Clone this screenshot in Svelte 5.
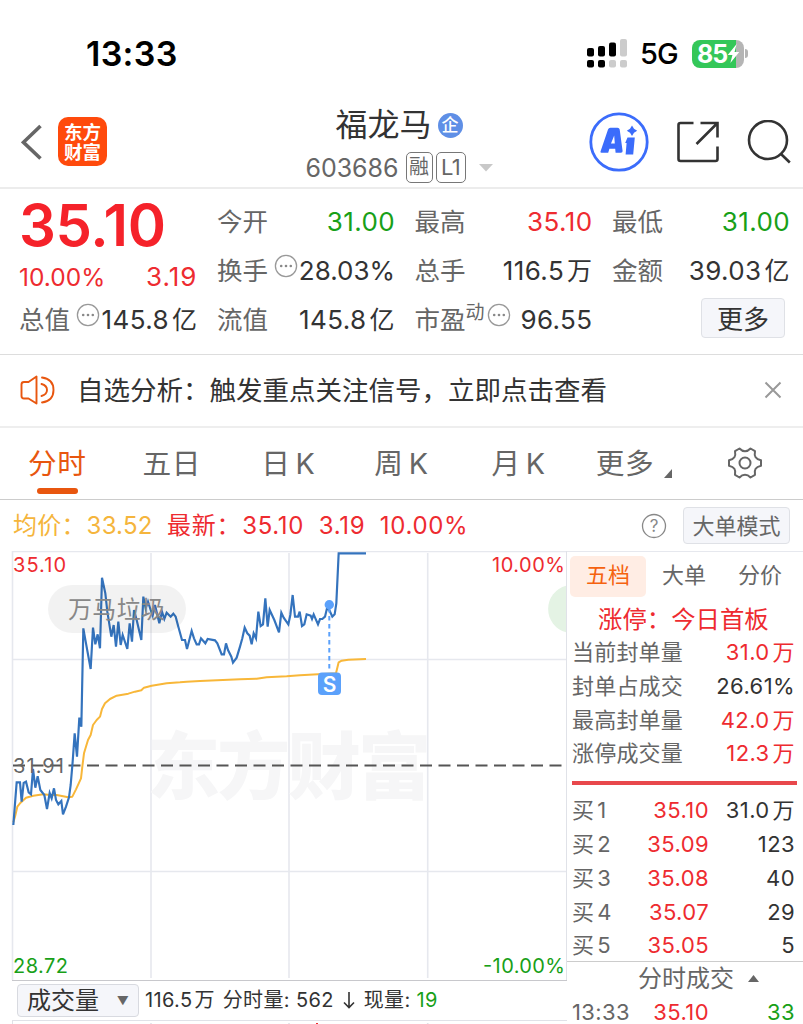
<script lang="ts">
	type Tone = 'up' | 'down' | 'plain';

	interface Quote {
		label: string;
		value: string;
		unit?: string;
		tone: Tone;
		info?: boolean;
		sup?: string;
	}

	const quotes: Quote[] = [
		{ label: '今开', value: '31.00', tone: 'down' },
		{ label: '最高', value: '35.10', tone: 'up' },
		{ label: '最低', value: '31.00', tone: 'down' },
		{ label: '换手', value: '28.03%', tone: 'plain', info: true },
		{ label: '总手', value: '116.5', unit: '万', tone: 'plain' },
		{ label: '金额', value: '39.03', unit: '亿', tone: 'plain' },
		{ label: '流值', value: '145.8', unit: '亿', tone: 'plain' },
		{ label: '市盈', value: '96.55', tone: 'plain', info: true, sup: '动' }
	];

	const periods = ['分时', '五日', '日K', '周K', '月K'];
	let period = $state('分时');

	const sideTabs = ['五档', '大单', '分价'];
	let sideTab = $state('五档');

	const limitRows = [
		{ label: '当前封单量', value: '31.0', unit: '万', tone: 'up' },
		{ label: '封单占成交', value: '26.61%', unit: '', tone: 'plain' },
		{ label: '最高封单量', value: '42.0', unit: '万', tone: 'up' },
		{ label: '涨停成交量', value: '12.3', unit: '万', tone: 'up' }
	];

	const bids = [
		{ level: 1, price: '35.10', volume: '31.0', unit: '万' },
		{ level: 2, price: '35.09', volume: '123', unit: '' },
		{ level: 3, price: '35.08', volume: '40', unit: '' },
		{ level: 4, price: '35.07', volume: '29', unit: '' },
		{ level: 5, price: '35.05', volume: '5', unit: '' }
	];

	// both series are kept at 3 units per px
	const priceLine =
		'40,840 50,712 60,712 65,770 71,714 78,710 86,742 93,748 99,672 106,728 113,694 121,735 133,750 141,792 149,744 155,760 162,730 168,765 175,778 184,768 189,808 198,785 207,757 212,720 218,650 224,565 231,635 238,518 244,545 250,250 258,295 272,372 279,248 286,298 293,268 300,310 306,98 316,145 322,200 334,275 341,240 348,305 355,230 362,300 368,270 382,312 389,235 396,290 402,195 410,225 424,285 430,155 437,190 444,170 452,195 458,212 465,180 478,235 486,200 493,222 500,203 512,215 520,206 527,215 535,245 546,285 555,285 561,312 575,258 582,280 590,298 597,298 603,280 616,295 623,282 645,286 652,295 665,328 672,328 678,295 684,315 694,335 699,353 710,338 720,305 727,280 734,248 742,265 749,272 755,298 761,265 768,280 775,200 782,243 789,238 796,160 803,245 809,195 823,225 837,262 844,203 851,218 865,238 871,210 878,150 885,215 894,215 899,200 906,243 913,238 920,208 932,212 936,222 941,208 954,238 960,222 967,222 975,215 981,190 988,195 997,215 1004,208 1009,175 1016,25 1098,25';
	const averageLine =
		'40,832 45,815 52,785 60,775 78,758 100,752 130,748 150,750 170,750 205,757 217,755 228,733 243,700 247,665 252,625 264,585 272,570 279,540 290,525 300,515 306,492 315,475 330,462 350,452 385,446 405,440 424,436 432,428 455,422 500,415 540,412 560,410 600,408 720,403 770,401 800,397 860,394 900,391 954,388 1008,385 1016,352 1025,347 1045,344 1098,342';
</script>

{#snippet dots()}
	<svg class="dots" width="24" height="24" viewBox="0 0 24 24">
		<circle cx="12" cy="12" r="10.6" fill="none" stroke="#999" stroke-width="1.3" />
		<circle cx="7.2" cy="12" r="1.3" fill="#888" />
		<circle cx="12" cy="12" r="1.3" fill="#888" />
		<circle cx="16.8" cy="12" r="1.3" fill="#888" />
	</svg>
{/snippet}

<div class="screen">
	<div class="status">
		<span class="clock">13:33</span>
		<svg width="42" height="30" viewBox="0 0 42 30">
			<g fill="#000">
				<rect x="1" y="9" width="7" height="8.5" rx="2" />
				<rect x="12" y="7" width="7" height="10.5" rx="2" />
				<rect x="23" y="3.5" width="7" height="14" rx="2" />
				<rect x="1" y="21" width="7" height="7.5" rx="2" />
				<rect x="12" y="21" width="7" height="7.5" rx="2" />
			</g>
			<g fill="#ccc">
				<rect x="34" y="0" width="7" height="17.5" rx="2" />
				<rect x="23" y="21" width="7" height="7.5" rx="2" />
				<rect x="34" y="21" width="7" height="7.5" rx="2" />
			</g>
		</svg>
		<span class="network">5G</span>
		<div class="battery">
			<span>85</span>
			<svg width="13" height="21" viewBox="0 0 12 20">
				<path d="M9 1 0.5 11.5H5L3 19 11.5 8.5H7Z" fill="#fff" />
			</svg>
		</div>
		<i class="battery-tip"></i>
	</div>

	<header>
		<div class="left">
			<svg width="22" height="36" viewBox="0 0 22 36" fill="none" stroke="#666" stroke-width="3.6">
				<path d="M19.5 2 2.5 18.3 19.5 34.5" />
			</svg>
			<div class="logo"><span>东方</span><span>财富</span></div>
		</div>
		<div class="stock">
			<div class="name">
				<span>福龙马</span>
				<i class="corp">企</i>
			</div>
			<div class="code">
				<span>603686</span>
				<i class="tag">融</i>
				<i class="tag wide">L1</i>
				<svg width="14" height="8" viewBox="0 0 14 8"><path d="M0 0H14L7 7.5Z" fill="#c8c8c8" /></svg>
			</div>
		</div>
		<div class="actions">
			<svg width="60" height="60" viewBox="0 0 60 60">
				<circle cx="30" cy="30" r="28.2" fill="none" stroke="#3b6cfb" stroke-width="2.8" />
				<path
					fill="#3b6cfb"
					fill-rule="evenodd"
					d="M11.5 39.5 19 17.5Q19.6 15.800 21.400 15.800H28.500Q30.400 15.800 30.700 17.600L33.600 39Q33.700 40.800 32 40.800H26.600L26.200 36.800H20.400L19.200 40.800H12.500Q11.200 40.800 11.500 39.500ZM22 31.500H25.800L25.200 23.500Z"
				/>
				<path d="M38.500 25.500H45.800L44.200 42.500H36.600L37.600 31H36.200Z" fill="#3b6cfb" />
				<path d="M43 13.500 45 16.700 48.200 18.700 45 20.700 43 23.900 41 20.700 37.800 18.700 41 16.700Z" fill="#3b6cfb" />
			</svg>
			<svg width="44" height="44" viewBox="0 0 44 44" fill="none" stroke="#333" stroke-width="2.6">
				<path d="M17.5 3H4.5Q2.5 3 2.5 5V39Q2.5 41 4.5 41H39.5Q41.5 41 41.5 39V26.5" />
				<path d="M24.5 3H41.5V17.5M41.5 3 20.5 24" />
			</svg>
			<svg width="44" height="44" viewBox="0 0 44 44" fill="none" stroke="#333" stroke-width="2.6">
				<circle cx="21" cy="20" r="19" />
				<path d="M33.5 33.5 42.8 42.5" />
			</svg>
		</div>
	</header>

	<section class="quote">
		<div class="main">
			<div class="last">35.10</div>
			<div class="change"><span>10.00%</span><span class="diff">3.19</span></div>
			<div class="cell">
				<span class="label">总值</span>
				{@render dots()}
				<span class="value">145.8<b>亿</b></span>
			</div>
		</div>
		<div class="cells">
			{#each quotes as q}
				<div class="cell">
					<span class="label">{q.label}</span>
					{#if q.sup}<span class="sup">{q.sup}</span>{/if}
					{#if q.info}{@render dots()}{/if}
					<span class="value {q.tone}" class:percent={q.value.endsWith('%')}>
						{q.value}{#if q.unit}<b>{q.unit}</b>{/if}
					</span>
				</div>
			{/each}
			<div class="cell"><button type="button" class="more">更多</button></div>
		</div>
	</section>

	<div class="notice">
		<svg width="36" height="30" viewBox="0 0 36 30" fill="none" stroke="#e8560f" stroke-width="1.9" stroke-linejoin="round" stroke-linecap="round">
			<path d="M16.5 1.5V28.5L8.5 23.5H4Q1.5 23.5 1.5 21V9.5Q1.5 7 4 7H8.5Z" />
			<path d="M21.5 9Q27 10.5 27 15T21.5 21" />
			<path d="M22 2.5Q33.5 4 33.5 15T22 27.5" />
		</svg>
		<span>自选分析：触发重点关注信号，立即点击查看</span>
		<svg class="close" width="18" height="18" viewBox="0 0 18 18" stroke="#999" stroke-width="2">
			<path d="M1.5 1.5 16.5 16.5M16.5 1.5 1.5 16.5" />
		</svg>
	</div>

	<nav>
		{#each periods as p}
			<button type="button" class="period" class:active={p === period} onclick={() => (period = p)}>
				{#if p.endsWith('K')}{p[0]}<em>K</em>{:else}{p}{/if}
			</button>
		{/each}
		<button type="button" class="period others">
			更多
			<svg width="8" height="9" viewBox="0 0 8 9"><path d="M8 0V9H0Z" fill="#666" /></svg>
		</button>
		<svg width="34" height="32" viewBox="0 0 34 32" fill="none" stroke="#666" stroke-width="2">
			<circle cx="17" cy="16" r="5.5" />
			<path
				stroke-linejoin="round"
				d="M11.5 1.5Q14 4.2 17 4.2T22.5 1.5L27 4.2Q26.2 8 27.6 10.2T33 13.3V18.7Q29 19.6 27.6 21.8T27 27.8L22.5 30.5Q20 27.8 17 27.8T11.5 30.5L7 27.8Q7.8 24 6.4 21.8T1 18.7V13.3Q5 12.4 6.4 10.2T7 4.2Z"
			/>
		</svg>
	</nav>

	<div class="legend">
		<span class="avg">均价：<b>33.52</b></span>
		<span>最新：<b>35.10</b></span>
		<span>3.19</span>
		<span>10.00%</span>
		<svg width="26" height="26" viewBox="0 0 26 26">
			<circle cx="13" cy="13" r="11.5" fill="none" stroke="#888" stroke-width="1.3" />
			<text x="13" y="19" text-anchor="middle" font-size="17" fill="#888">?</text>
		</svg>
		<button type="button" class="mode">大单模式</button>
	</div>

	<div class="body">
		<div class="chart">
			<svg width="567" height="430" viewBox="0 551 567 430">
				<g fill="none" stroke="#e6e8ee" stroke-width="1.6">
					<path d="M12 551.5H567M12.5 551V980" />
					<path d="M151 553V978M289 553V978M427.7 553V978M13 659.5H566M13 871.5H566" />
				</g>
				<text class="mark" x="147" y="793" textLength="284">东方财富</text>
				<path d="M566 585.8A24 24 0 0 0 566 632.2Z" fill="#e4f3e4" />
				<path d="M566.5 551V980" stroke="#e0e2e8" stroke-width="1" />
				<path d="M13 765.6H562" stroke="#555" stroke-width="2" stroke-dasharray="12 6.5" />
				<g transform="translate(0 545) scale(.33333)" fill="none">
					<polyline points={averageLine} stroke="#f8b739" stroke-width="6" stroke-linejoin="round" />
					<polyline points={priceLine} stroke="#3473bd" stroke-width="6.5" />
				</g>
				<rect x="48" y="585" width="138" height="48" rx="24" fill="#000" fill-opacity=".05" />
				<text x="68" y="618" font-size="24" fill="#888" textLength="97">万马垃圾</text>
				<path d="M329.3 608V672" stroke="#5ba1fb" stroke-width="2" stroke-dasharray="4.5 3.5" />
				<circle cx="329.3" cy="604.8" r="4.7" fill="#5ba1fb" />
				<rect x="318" y="672.5" width="23" height="22.5" rx="4" fill="#5ba1fb" />
				<text x="329.5" y="691.5" text-anchor="middle" font-size="21" font-weight="600" fill="#fff">S</text>
				<g font-size="20">
					<text x="13" y="571.5" fill="#ee2b30" textLength="53">35.10</text>
					<text x="492" y="571.5" fill="#ee2b30" textLength="73">10.00%</text>
					<text x="13" y="772.5" fill="#666" textLength="51">31.91</text>
					<text x="13" y="972.5" fill="#18a018" textLength="55">28.72</text>
					<text x="483" y="972.5" fill="#18a018" textLength="82">-10.00%</text>
				</g>
				<path d="M12 980.5H567" stroke="#c8c8cc" />
			</svg>
			<div class="volume">
				<button type="button" class="indicator">成交量<i>▼</i></button>
				<span>116.5<b>万</b></span>
				<span>分时量: 562</span>
				<svg width="12" height="17" viewBox="0 0 12 17" fill="none" stroke="#333" stroke-width="1.6"><path d="M6 0V15.5M1 10.5 6 15.5 11 10.5" /></svg>
				<span>现量: <span class="down">19</span></span>
			</div>
			<svg width="567" height="4" viewBox="0 1020 567 4" fill="none" stroke="#e0e2e8">
				<path d="M12 1020.5H567M12.5 1020V1024" />
				<path d="M151 1023V1024M289 1023V1024M427.7 1023V1024" stroke-width="1.6" />
				<path d="M317 1023V1024" stroke="#ee2b30" stroke-width="2" />
			</svg>
		</div>

		<aside>
			<div class="side-tabs">
				{#each sideTabs as t}
					<button type="button" class:active={t === sideTab} onclick={() => (sideTab = t)}>{t}</button>
				{/each}
			</div>
			<div class="limit">涨停：今日首板</div>
			{#each limitRows as row}
				<div class="row">
					<span class="grey">{row.label}</span>
					<span class="num {row.tone}">{row.value}{#if row.unit}<b>{row.unit}</b>{/if}</span>
				</div>
			{/each}
			<div class="ratio"></div>
			{#each bids as bid}
				<div class="row bid">
					<span class="grey">买<b>{bid.level}</b></span>
					<span class="num up">{bid.price}</span>
					<span class="num plain">{bid.volume}{#if bid.unit}<b>{bid.unit}</b>{/if}</span>
				</div>
			{/each}
			<div class="trades">
				分时成交
				<svg width="11" height="7" viewBox="0 0 11 7"><path d="M0 7H11L5.5 0Z" fill="#666" /></svg>
			</div>
			<div class="row bid tick">
				<span class="num grey">13:33</span>
				<span class="num up">35.10</span>
				<span class="num down">33</span>
			</div>
		</aside>
	</div>
</div>

<style>
	.screen {
		width: 803px;
		height: 1024px;
		overflow: hidden;
		background: #fff;
		color: #333;
		font-family: Inter, 'Noto Sans CJK SC', sans-serif;
		font-weight: 400;
		white-space: nowrap;
	}
	.screen * {
		box-sizing: border-box;
	}
	button {
		border: none;
		background: none;
		padding: 0;
		margin: 0;
		font: inherit;
		color: inherit;
	}
	b,
	i,
	em {
		font-style: normal;
		font-weight: inherit;
	}
	svg {
		display: block;
		flex: none;
	}
	.up {
		color: #ee2b30;
	}
	.down {
		color: #18a018;
	}
	.plain {
		color: #333;
	}
	.grey {
		color: #666;
	}

	.status {
		height: 100px;
		padding: 7px 55px 0 86px;
		display: flex;
		align-items: center;
		color: #000;
	}
	.clock {
		flex: 1;
		font-size: 34px;
		font-weight: 600;
		letter-spacing: 0.3px;
	}
	.network {
		margin: 0 14px 0 12px;
		font-size: 29px;
		font-weight: 500;
		letter-spacing: -0.8px;
	}
	.battery {
		width: 52px;
		height: 28px;
		border-radius: 8px;
		padding-left: 5px;
		display: flex;
		align-items: center;
		background: linear-gradient(90deg, #34c759 85%, #b5b5b5 85%);
		color: #fff;
		font-size: 25px;
		font-weight: 700;
		letter-spacing: -1px;
	}
	.battery-tip {
		width: 3px;
		height: 9px;
		margin-left: 1px;
		border-radius: 0 4px 4px 0;
		background: #b5b5b5;
	}

	header {
		height: 89px;
		border-bottom: 2px solid #ececec;
		display: flex;
	}
	.left {
		width: 299px;
		padding: 17px 0 0 21px;
		display: flex;
		align-items: center;
		align-self: flex-start;
		gap: 15px;
	}
	.logo {
		width: 49px;
		height: 49px;
		border-radius: 10px;
		background: #ff4a0c;
		color: #fff;
		display: flex;
		flex-direction: column;
		align-items: center;
		justify-content: center;
		font-size: 18.5px;
		line-height: 20px;
		font-weight: 700;
	}
	.stock {
		width: 200px;
		padding-top: 5px;
		display: flex;
		flex-direction: column;
		align-items: center;
	}
	.name {
		height: 40px;
		display: flex;
		align-items: center;
		gap: 6px;
		font-size: 32px;
		line-height: 42px;
	}
	.corp {
		width: 25px;
		height: 25px;
		border-radius: 50%;
		background: #5f8fe6;
		color: #fff;
		font-size: 17px;
		line-height: 24px;
		font-weight: 500;
		text-align: center;
	}
	.code {
		height: 46px;
		padding-top: 3px;
		display: flex;
		align-items: center;
		color: #666;
		font-size: 25px;
	}
	.tag {
		height: 31px;
		width: 27px;
		margin-left: 7px;
		border: 1.5px solid #777;
		border-radius: 5px;
		font-size: 20px;
		line-height: 29px;
		text-align: center;
	}
	.tag.wide {
		width: 30px;
		margin: 0 13px 0 3px;
		font-size: 22px;
		letter-spacing: -0.5px;
	}
	.actions {
		flex: 1;
		height: 84px;
		padding-right: 12px;
		display: flex;
		align-items: center;
		justify-content: flex-end;
		gap: 27px;
	}

	.quote {
		height: 166px;
		padding: 8px 14px 0 19px;
		border-bottom: 1px solid #ddd;
		display: flex;
		gap: 20.5px;
	}
	.main {
		width: 178px;
		color: #ee2b30;
	}
	.last {
		height: 56px;
		color: #f5222a;
		font-size: 58px;
		line-height: 56px;
		font-weight: 600;
		letter-spacing: -0.3px;
	}
	.change {
		height: 42px;
		line-height: 48px;
		display: flex;
		justify-content: space-between;
		font-size: 24.5px;
	}
	.diff {
		margin-right: -1px;
		font-size: 26px;
		letter-spacing: 1px;
	}
	.cells {
		flex: 1;
		display: grid;
		grid-template-columns: repeat(3, 177px);
		grid-auto-rows: 49px;
		column-gap: 20.5px;
	}
	.cell {
		height: 49px;
		display: flex;
		align-items: center;
		font-size: 26px;
		line-height: 50px;
	}
	.label {
		color: #666;
		font-size: 25.5px;
	}
	.dots {
		margin: 0 0 10px 6px;
	}
	.sup {
		margin-bottom: 14px;
		margin-right: -4px;
		color: #666;
		font-size: 19px;
	}
	.value {
		margin-left: auto;
		margin-right: -1px;
		letter-spacing: 0.4px;
	}
	.value.percent {
		letter-spacing: 0;
	}
	.main .value {
		color: #333;
	}
	.value b {
		margin-left: 3px;
		font-size: 25px;
	}
	.more {
		width: 84px;
		height: 40px;
		margin: -4px 4px 0 auto;
		border: 1px solid #dfe1e6;
		border-radius: 4px;
		background: #f5f6fa;
		font-size: 26px;
		line-height: 41px;
	}

	.notice {
		height: 73px;
		padding: 0 21px 2px 20px;
		border-bottom: 2px solid #eee;
		display: flex;
		align-items: center;
		font-size: 26.5px;
		line-height: 70px;
	}
	.notice span {
		margin-left: 21px;
	}
	.close {
		margin-left: auto;
	}

	nav {
		height: 72px;
		padding: 0 41px 0 28px;
		border-bottom: 1px solid #ccc;
		display: flex;
		align-items: center;
		color: #666;
		font-size: 28.7px;
		line-height: 71px;
	}
	nav > svg {
		margin: -2px 0 0 auto;
	}
	.period {
		position: relative;
		height: 71px;
		letter-spacing: 0.6px;
	}
	.period:nth-child(1) {
		margin-right: 56px;
	}
	.period:nth-child(2) {
		margin-right: 60px;
	}
	.period:nth-child(3) {
		margin-right: 59px;
	}
	.period:nth-child(4) {
		margin-right: 63px;
	}
	.period:nth-child(5) {
		margin-right: 50px;
	}
	.period em {
		margin-left: 5px;
	}
	.period.active {
		color: #e8560f;
	}
	.period.active::after {
		content: '';
		position: absolute;
		left: 9px;
		bottom: 5px;
		width: 41px;
		height: 6px;
		border-radius: 3px;
		background: #e8560f;
	}
	.others {
		display: flex;
		align-items: center;
		gap: 10px;
	}
	.others svg {
		margin-top: 20px;
	}

	.legend {
		height: 51px;
		padding: 0 13px 0 13px;
		display: flex;
		align-items: center;
		font-size: 24px;
		line-height: 52px;
		color: #ee2b30;
	}
	.legend > span {
		margin-right: 14.5px;
		letter-spacing: 0.7px;
	}
	.legend b {
		margin-left: 1px;
	}
	.legend .avg {
		color: #f5b53c;
		letter-spacing: 0.2px;
	}
	.legend svg {
		margin-left: auto;
	}
	.mode {
		width: 107px;
		height: 37px;
		margin-left: 16px;
		border: 1px solid #dfe1e6;
		border-radius: 4px;
		background: #f5f6fa;
		color: #666;
		font-size: 22px;
		line-height: 36px;
	}

	.body {
		display: flex;
	}
	.chart {
		width: 567px;
		flex: none;
	}
	.mark {
		font-size: 73px;
		font-weight: 900;
		fill: #f6f6f7;
	}
	.volume {
		height: 39px;
		padding-left: 17px;
		display: flex;
		align-items: center;
		gap: 8px;
		font-size: 20px;
		line-height: 41px;
	}
	.volume > span {
		letter-spacing: 0.35px;
	}
	.volume svg {
		margin: 0 1px;
	}
	.indicator {
		width: 122px;
		height: 33px;
		margin-right: -2px;
		padding: 0 9px;
		border: 1px solid #d8dae0;
		border-radius: 4px;
		background: #f5f6fa;
		display: flex;
		align-items: center;
		justify-content: space-between;
		font-size: 24px;
		line-height: 32px;
	}
	.indicator i {
		font-size: 12px;
		color: #666;
	}
	.volume b {
		margin-left: 2px;
	}

	aside {
		width: 236px;
		height: 473px;
		padding: 4px 8px 0 3px;
		border-top: 1px solid #e6e8ee;
		font-size: 22px;
	}
	.side-tabs {
		height: 41px;
		display: grid;
		grid-template-columns: repeat(3, 76px);
		color: #666;
		line-height: 39px;
	}
	.side-tabs button {
		padding-bottom: 2px;
	}
	.side-tabs .active {
		border-radius: 5px;
		background: #ffede4;
		color: #f5620f;
	}
	.limit {
		height: 38px;
		padding-left: 28px;
		color: #ee2b30;
		font-size: 24.4px;
		line-height: 44px;
	}
	.row {
		height: 33.8px;
		padding-left: 2px;
		line-height: 34px;
		display: flex;
		justify-content: space-between;
	}
	.row .grey {
		letter-spacing: 0.2px;
	}
	.row b {
		margin-left: 3px;
	}
	.row .num {
		letter-spacing: 0.4px;
	}
	.ratio {
		height: 4px;
		margin: 11px -2px 8px 2px;
		background: #e8484c;
	}
	.row.bid {
		display: grid;
		grid-template-columns: 51px 86px 1fr;
		text-align: right;
	}
	.row.bid .grey {
		text-align: left;
	}
	.trades {
		height: 34px;
		margin: -1px -8px 0 -3px;
		padding-left: 71px;
		border-top: 1px solid #ccc;
		display: flex;
		align-items: center;
		gap: 14px;
		color: #666;
		font-size: 24px;
		line-height: 33px;
	}
	.row.tick {
		height: 27px;
		padding-top: 5px;
		line-height: 24px;
	}
</style>
